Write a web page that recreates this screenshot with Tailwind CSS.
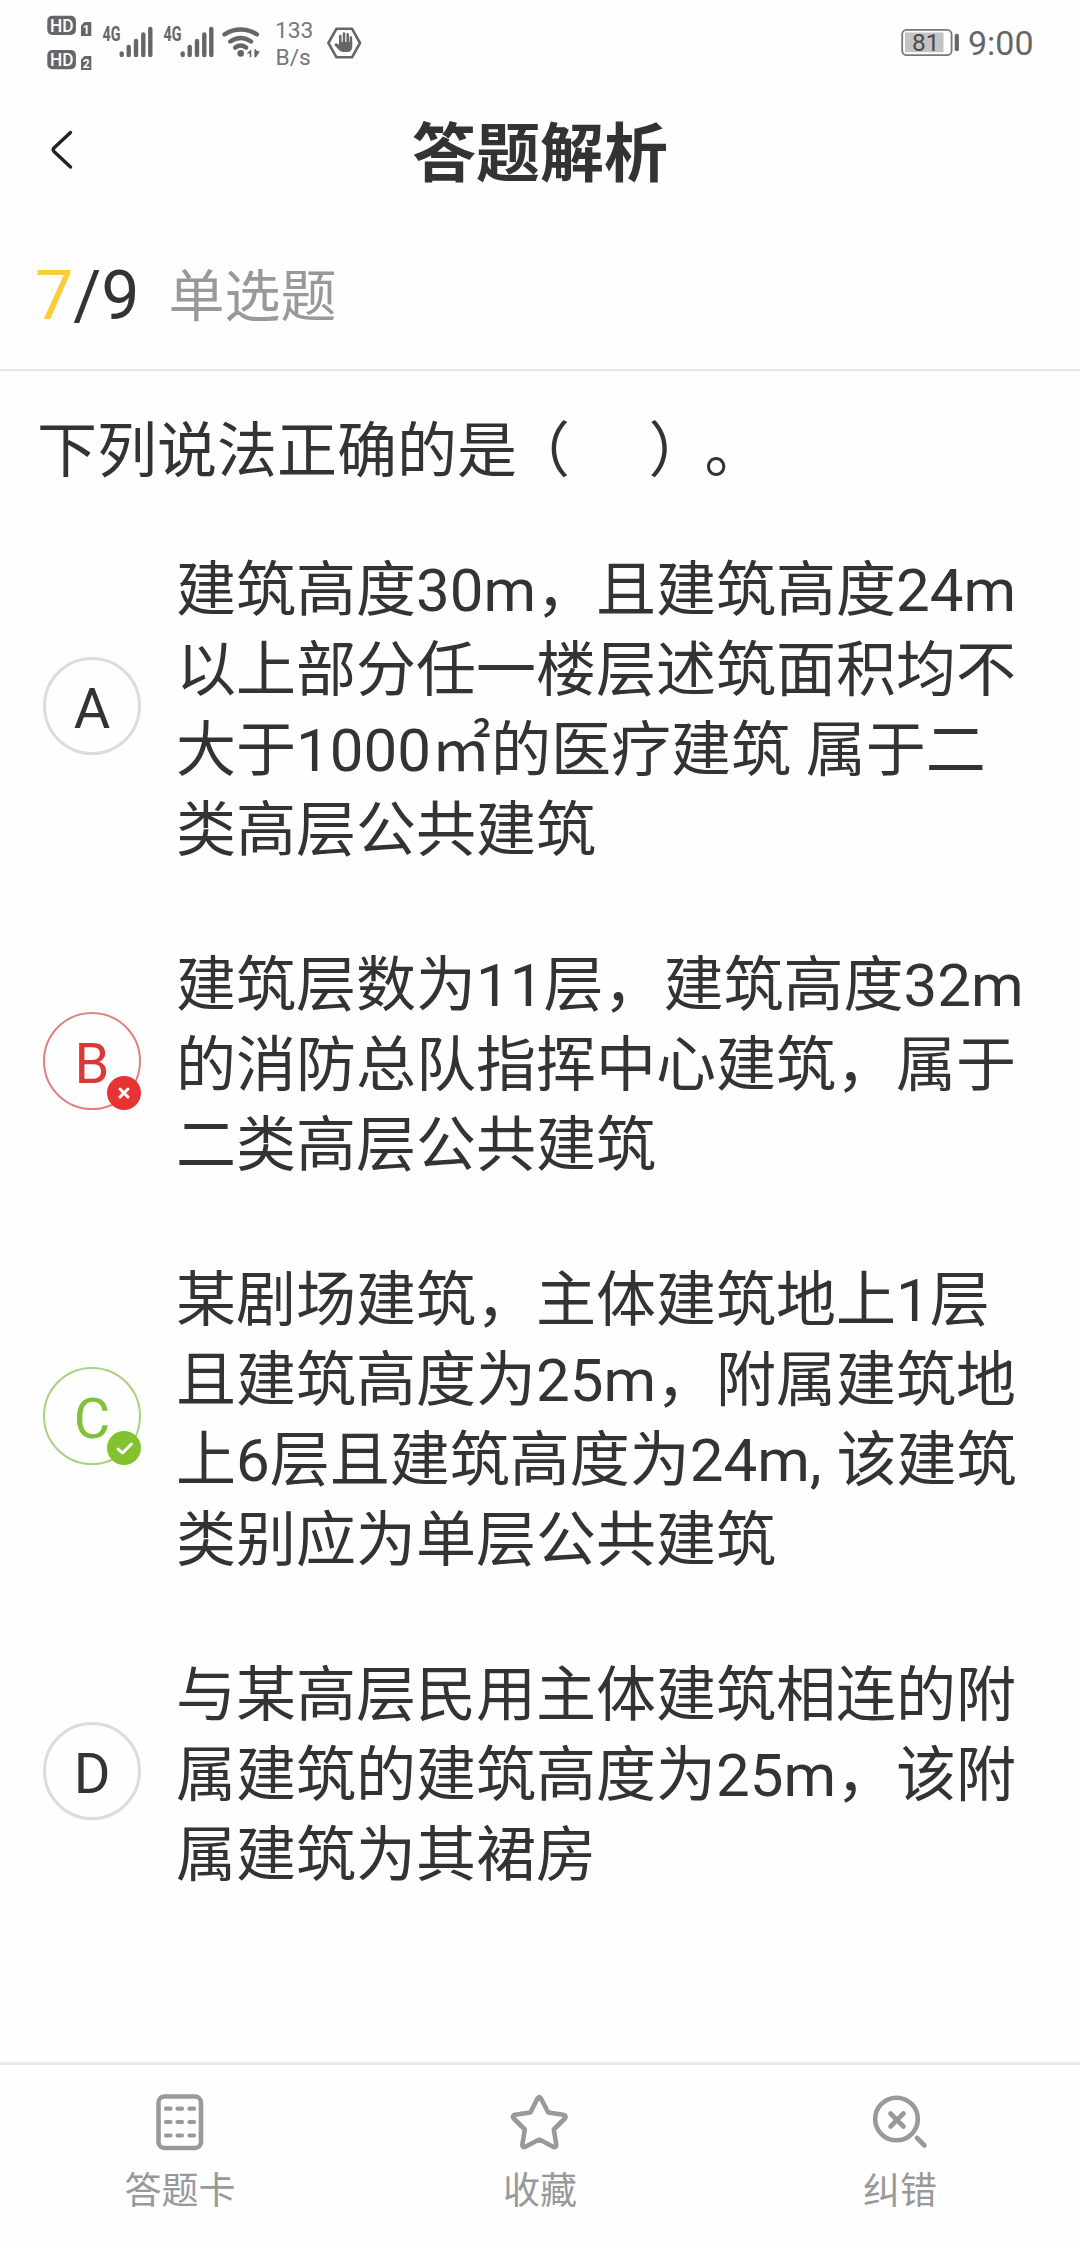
<!DOCTYPE html>
<html lang="zh-CN">
<head>
  <meta charset="UTF-8" />
  <meta name="viewport" content="width=device-width, initial-scale=1.0" />
  <title>答题解析</title>
  <script src="https://cdn.jsdelivr.net/npm/@tailwindcss/browser@4"></script>
</head>
<body class="w-[1080px] h-[2244px] flex flex-col overflow-hidden bg-[#fefefe] text-[#333333] font-[Roboto,'Noto_Sans_CJK_SC',sans-serif] [text-spacing-trim:space-all]">

  <!-- Status bar -->
  <div class="h-[90px] shrink-0 flex justify-between">
    <svg class="w-[400px] h-[90px]" viewBox="0 0 400 90" fill="#666">
      <rect x="47.3" y="15.7" width="28.6" height="19.3" rx="5" />
      <rect x="47.3" y="50" width="28.6" height="19.3" rx="5" />
      <g fill="#fefefe" font-size="18.5" font-weight="500">
        <text x="50" y="32" textLength="23.5" lengthAdjust="spacingAndGlyphs">HD</text>
        <text x="50" y="66.3" textLength="23.5" lengthAdjust="spacingAndGlyphs">HD</text>
      </g>
      <path d="M84.5 22h6.8v14H81V25.5z" />
      <path d="M84.5 56h6.8v14H81V59.5z" />
      <g fill="#fefefe" font-size="12" font-weight="700">
        <text x="82.7" y="33.6">1</text>
        <text x="82.7" y="67.6">2</text>
      </g>
      <g font-size="19.5" font-weight="700">
        <text x="102.5" y="40.7" textLength="18" lengthAdjust="spacingAndGlyphs">4G</text>
        <text x="163.5" y="40.7" textLength="18" lengthAdjust="spacingAndGlyphs">4G</text>
      </g>
      <g fill="none" stroke="#666" stroke-width="4.4" stroke-linecap="round">
        <path d="M121.7 53.5v1.4M128.7 47v8M136 41v14M143.3 34.5v20.5M150.3 29v26" />
        <path d="M182.7 53.5v1.4M189.7 47v8M197 41v14M204.3 34.5v20.5M211.3 29v26" />
        <path d="M224.5 34.3q16.2-9.5 32.4 0M230.3 41.5q10.4-7 20.8 0M235.3 47.6q5.4-4 10.8 0" />
      </g>
      <circle cx="240.7" cy="53.4" r="3.3" />
      <path d="M246.5 53.5l4.8-4.2v8h-1.6v-3.8zM254.4 57.3v-8h1.6v1l3.7 1.4-3.7 5.6z" />
      <g font-size="22.8" fill="#777">
        <text x="275" y="38">133</text>
        <text x="275.5" y="64.5">B/s</text>
      </g>
      <path d="M336.5 28.7h15.5L360 43l-8 14.3h-15.5L328.4 43z" fill="none" stroke="#666" stroke-width="2.6" stroke-linejoin="round" />
      <path d="M340.3 36v8M344 33.6v9M347.7 34.2v9M350.9 37.5v7" stroke="#666" stroke-width="2.5" stroke-linecap="round" />
      <path d="M339 42h13.2v5.5q-1 4.600-5 4.600h-4q-2.500 0-4.500-2.400l-4.300-4.800q.6-2.300 3-1.200l1.600 1.300z" />
    </svg>
    <svg class="w-[200px] h-[90px]" viewBox="880 0 200 90" fill="#666">
      <rect x="902.2" y="29.8" width="49.4" height="25.4" rx="4.5" fill="none" stroke="#777" stroke-width="1.8" />
      <rect x="905" y="32.5" width="38.5" height="19.7" fill="#c3c3c3" />
      <rect x="954.7" y="33.8" width="4.2" height="17.4" rx="2" />
      <text x="912" y="51" font-size="24.5" fill="#4a4a4a">81</text>
      <text x="968" y="55" font-size="34">9:00</text>
    </svg>
  </div>

  <!-- Title -->
  <header class="h-[122px] shrink-0 flex items-center justify-between px-[48px]">
    <svg class="w-7 h-[42px]" viewBox="0 0 28 42" fill="none" stroke="#222" stroke-width="3.4" stroke-linecap="round" stroke-linejoin="round">
      <path d="M22.5 2.5L6.2 17.8q-2 2 0 4L22.5 37" />
    </svg>
    <h1 class="text-[64px] leading-[80px] font-bold pt-[7px]">答题解析</h1>
    <div class="w-7"></div>
  </header>

  <!-- Progress -->
  <div class="h-[159px] shrink-0 flex items-start pl-[35px] pt-[44px] border-b-2 border-[#e6e6e6]">
    <div class="text-[68px] leading-[80px]"><span class="text-[#fbcd3c]">7</span>/9</div>
    <div class="ml-[29px] pt-px text-[56px] leading-[80px] text-[#999999]">单选题</div>
  </div>

  <main class="grow pt-[41px] text-[60px] leading-[80px] whitespace-nowrap">
    <p class="pl-[37px]">下列说法正确的<span class="tracking-[-7px]">是</span><span class="mr-[19px]">（</span>&nbsp;&nbsp;&nbsp;&nbsp;<span class="tracking-[-4px]">）</span>。</p>

    <div class="mt-[59px] flex flex-col gap-[75px] pl-[43px]">
      <div class="flex items-center gap-[35px]">
        <div class="size-[98px] -mt-[10px] shrink-0 rounded-full border-3 border-[#dcdcdc] flex items-center justify-center text-[56px] pt-[6px]">A</div>
        <p>建筑高度30m，且建筑高度24m<br>以上部分任一楼层述筑面积均不<br>大于1000㎡的医疗建筑 属于二<br>类高层公共建筑</p>
      </div>

      <div class="flex items-center gap-[35px]">
        <div class="relative size-[98px] -mt-[10px] shrink-0 rounded-full border-2 border-[#e08080] flex items-center justify-center text-[56px] pt-[6px] text-[#db3838]">B
          <svg class="absolute -right-[2px] -bottom-[2px] size-[34px]" viewBox="0 0 34 34">
            <circle cx="17" cy="17" r="17" fill="#e83333" />
            <path d="M13 13l8 8M21 13l-8 8" stroke="#fff" stroke-width="3" stroke-linecap="round" />
          </svg>
        </div>
        <p>建筑层数为11层，建筑高度32m<br>的消防总队指挥中心建筑，属于<br>二类高层公共建筑</p>
      </div>

      <div class="flex items-center gap-[35px]">
        <div class="relative size-[98px] -mt-[10px] shrink-0 rounded-full border-2 border-[#a9d27c] flex items-center justify-center text-[56px] pt-[6px] text-[#82c03c]">C
          <svg class="absolute -right-[2px] -bottom-[2px] size-[34px]" viewBox="0 0 34 34">
            <circle cx="17" cy="17" r="17" fill="#82c22f" />
            <path d="M11 18l4.5 4L24.5 13" fill="none" stroke="#fff" stroke-width="3" stroke-linecap="round" stroke-linejoin="round" />
          </svg>
        </div>
        <p>某剧场建筑，主体建筑地上1层<br>且建筑高度为25m，附属建筑地<br>上6层且建筑高度为24m, 该建筑<br>类别应为单层公共建筑</p>
      </div>

      <div class="flex items-center gap-[35px]">
        <div class="size-[98px] -mt-[10px] shrink-0 rounded-full border-3 border-[#dcdcdc] flex items-center justify-center text-[56px] pt-[6px]">D</div>
        <p>与某高层民用主体建筑相连的附<br>属建筑的建筑高度为25m，该附<br>属建筑为其裙房</p>
      </div>
    </div>
  </main>

  <!-- Bottom nav -->
  <nav class="h-[182px] shrink-0 grid grid-cols-3 border-t-[3px] border-[#e8e8e8] pt-[27px] text-[37px] leading-[48px] text-[#999999]">
    <div class="flex flex-col items-center gap-[16px]">
      <svg class="size-[60px]" viewBox="0 0 60 60" fill="none" stroke="#999" stroke-width="4.6" stroke-linecap="round">
        <rect x="8.5" y="4.500" width="42.500" height="51.500" rx="6" />
        <path stroke-width="4.200" d="M16 16.700h4.500M27.500 16.700h4.500M39.500 16.700h4.500M16 30h4.500M27.500 30h4.500M39.500 30h4.500M16 43.500h4.500M27.500 43.500h4.500M39.500 43.500h4.500" />
      </svg>
      <span>答题卡</span>
    </div>
    <div class="flex flex-col items-center gap-[16px]">
      <svg class="size-[60px]" viewBox="0 0 60 60" fill="none" stroke="#999" stroke-width="4.6" stroke-linejoin="round">
        <path d="M27.5 6.5Q29.3 3.5 31 6.5L38.2 20.5L53.5 22.8Q57 23.8 54.8 26.5L43.8 37.5L46.3 52.8Q46.2 56 43.2 54.8L29.3 47.5L15.4 54.8Q12.3 56 12.3 52.8L14.8 37.5L3.8 26.5Q1.6 23.8 5 22.8L20.4 20.5z" />
      </svg>
      <span>收藏</span>
    </div>
    <div class="flex flex-col items-center gap-[16px]">
      <svg class="size-[60px]" viewBox="0 0 60 60" fill="none" stroke="#999" stroke-width="4.6" stroke-linecap="round">
        <circle cx="26.5" cy="27" r="21.3" />
        <path d="M20.5 21.5l13 13M33.5 21.5l-13 13M47 46l7.5 7.5" />
      </svg>
      <span>纠错</span>
    </div>
  </nav>
</body>
</html>
